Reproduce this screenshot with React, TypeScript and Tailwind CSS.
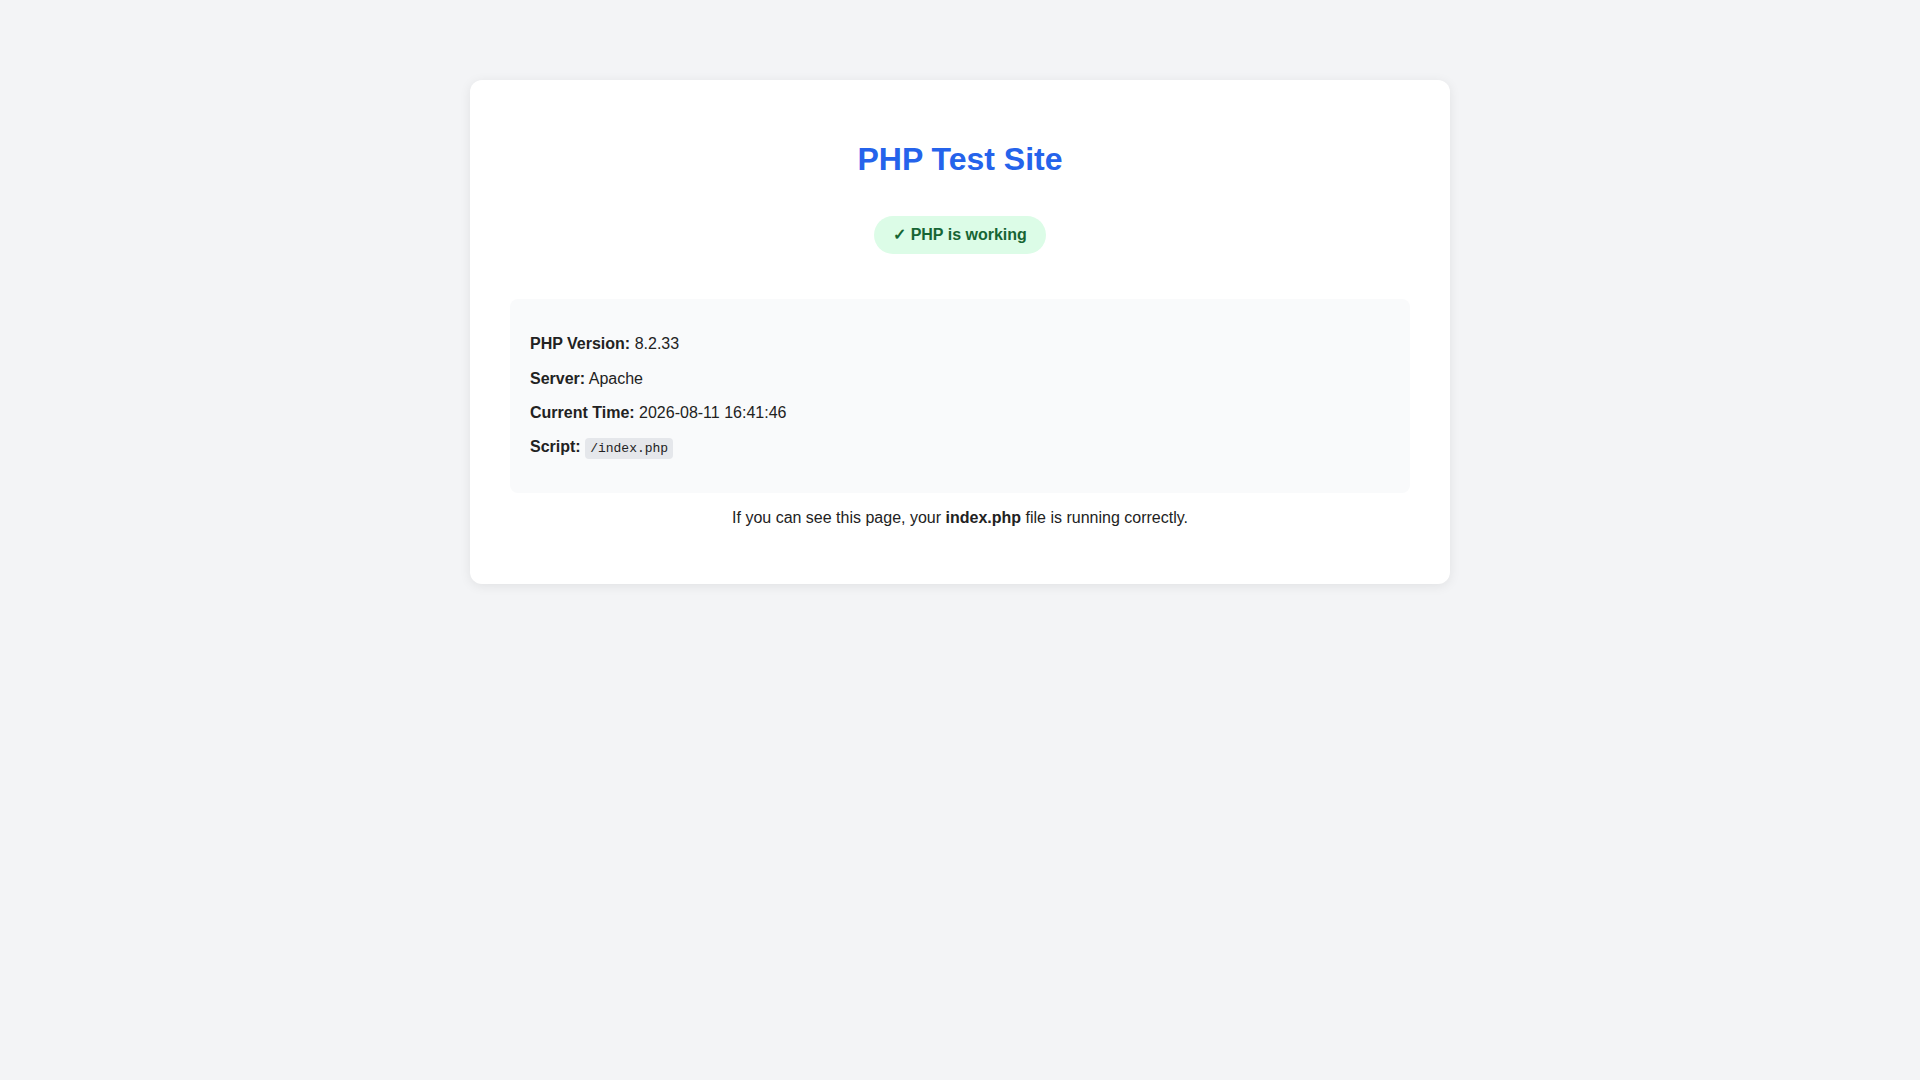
export default function App() {
  return (
    <div className="min-h-screen bg-[#f3f4f6] pt-20 font-['Liberation_Sans',Arial,sans-serif] text-base leading-[1.15] text-[#222]">
      <div className="mx-auto w-[980px] rounded-xl bg-white p-10 shadow-[0_2px_12px_rgba(0,0,0,0.08)]">
        <h1 className="mt-[21px] text-center text-[32px] font-bold text-[#2563eb]">
          PHP Test Site
        </h1>
        <div className="mt-[38px] text-center">
          <span className="inline-block rounded-full bg-[#dcfce7] px-[19px] py-[10px] font-bold text-[#166534]">
            ✓ PHP is working
          </span>
        </div>
        <div className="mt-[45px] rounded-lg bg-[#f9fafb] px-5 py-9">
          <div className="flex flex-col gap-4">
            <p>
              <strong>PHP Version:</strong> 8.2.33
            </p>
            <p>
              <strong>Server:</strong> Apache
            </p>
            <p>
              <strong>Current Time:</strong> 2026-08-11 16:41:46
            </p>
            <p>
              <strong>Script:</strong>{' '}
              <code className="rounded bg-[#e5e7eb] px-[5px] py-[3px] font-['Liberation_Mono',monospace] text-[13px]">
                /index.php
              </code>
            </p>
          </div>
        </div>
        <p className="my-4 text-center">
          If you can see this page, your <strong>index.php</strong> file is running correctly.
        </p>
      </div>
    </div>
  )
}
